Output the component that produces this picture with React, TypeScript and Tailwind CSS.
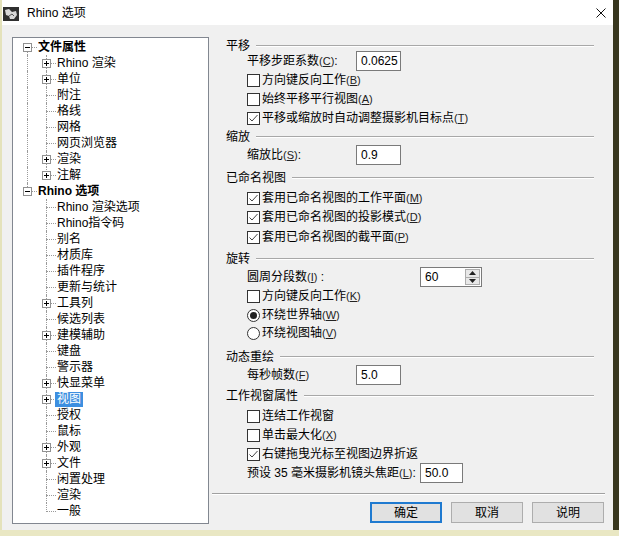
import React from "react";

type TreeNode = {
  label: string;
  level: 0 | 1;
  exp?: "minus" | "plus";
  sel?: boolean;
};

const tree: TreeNode[] = [
  { label: "文件属性", level: 0, exp: "minus" },
  { label: "Rhino 渲染", level: 1, exp: "plus" },
  { label: "单位", level: 1, exp: "plus" },
  { label: "附注", level: 1 },
  { label: "格线", level: 1 },
  { label: "网格", level: 1 },
  { label: "网页浏览器", level: 1 },
  { label: "渲染", level: 1, exp: "plus" },
  { label: "注解", level: 1, exp: "plus" },
  { label: "Rhino 选项", level: 0, exp: "minus" },
  { label: "Rhino 渲染选项", level: 1 },
  { label: "Rhino指令码", level: 1 },
  { label: "别名", level: 1 },
  { label: "材质库", level: 1 },
  { label: "插件程序", level: 1 },
  { label: "更新与统计", level: 1 },
  { label: "工具列", level: 1, exp: "plus" },
  { label: "候选列表", level: 1 },
  { label: "建模辅助", level: 1, exp: "plus" },
  { label: "键盘", level: 1 },
  { label: "警示器", level: 1 },
  { label: "快显菜单", level: 1, exp: "plus" },
  { label: "视图", level: 1, exp: "plus", sel: true },
  { label: "授权", level: 1 },
  { label: "鼠标", level: 1 },
  { label: "外观", level: 1, exp: "plus" },
  { label: "文件", level: 1, exp: "plus" },
  { label: "闲置处理", level: 1 },
  { label: "渲染", level: 1 },
  { label: "一般", level: 1 },
];

const ExpBox = ({ kind, left }: { kind: "minus" | "plus"; left: string }) => (
  <span className={`absolute top-[4px] ${left} w-[9px] h-[9px] border border-[#919191] bg-white`}>
    <span className="absolute left-[1px] top-[3px] w-[5px] h-px bg-black" />
    {kind === "plus" && <span className="absolute left-[3px] top-[1px] w-px h-[5px] bg-black" />}
  </span>
);

const TreeRow = ({ node, i }: { node: TreeNode; i: number }) => {
  // vertical guide of the root level runs from 文件属性 down to Rhino 选项
  const lastChild = i === 8 || i === 29;
  return (
    <div className={`relative h-4 flex items-center ${node.level === 0 ? "pl-[23px] font-bold" : "pl-[42px]"}`}>
      {i === 0 && <span className="absolute left-[14px] top-[13px] bottom-0 border-l border-dotted border-[#9a9a9a]" />}
      {i > 0 && i < 9 && <span className="absolute left-[14px] top-0 bottom-0 border-l border-dotted border-[#9a9a9a]" />}
      {i === 9 && <span className="absolute left-[14px] top-0 h-[4px] border-l border-dotted border-[#9a9a9a]" />}
      {node.level === 0 && (
        <>
          <span className="absolute left-[19px] w-[5px] top-[8px] border-t border-dotted border-[#9a9a9a]" />
          <ExpBox kind="minus" left="left-[10px]" />
        </>
      )}
      {node.level === 1 && (
        <>
          <span
            className={`absolute left-[33px] top-0 border-l border-dotted border-[#9a9a9a] ${lastChild ? "h-[9px]" : "bottom-0"}`}
          />
          <span className="absolute left-[33px] w-[10px] top-[8px] border-t border-dotted border-[#9a9a9a]" />
          {node.exp && <ExpBox kind={node.exp} left="left-[29px]" />}
        </>
      )}
      <span
        className={`relative leading-[15px] h-[15px] px-[2px] ${node.sel ? "bg-[#3d8fe0] text-white" : "text-black"}`}
      >
        {node.label}
      </span>
    </div>
  );
};

const Key = ({ k }: { k: string }) => (
  <span className="text-[11px] text-[#222]">
    (<span className="underline">{k}</span>)
  </span>
);

const Header = ({ title, mt }: { title: string; mt: string }) => (
  <div className={`h-[14px] ${mt} flex items-center pl-[14px] pr-[12px]`}>
    <span>{title}</span>
    <div className="flex-1 ml-[6px] border-t border-[#a8a8a8] border-b border-b-white" />
  </div>
);

const CheckBox = ({ on }: { on?: boolean }) => (
  <span className="w-[13px] h-[13px] border border-[#333] bg-white flex items-center justify-center shrink-0">
    {on && (
      <svg width="11" height="11" viewBox="0 0 11 11">
        <path d="M1.5 5.5 L4 8 L9.5 2" fill="none" stroke="#444" strokeWidth="1" />
      </svg>
    )}
  </span>
);

const Radio = ({ on }: { on?: boolean }) => (
  <span className="w-[13px] h-[13px] rounded-full border border-[#333] bg-white flex items-center justify-center shrink-0">
    {on && <span className="w-[7px] h-[7px] rounded-full bg-[#222]" />}
  </span>
);

const Check = ({ label, k, on, mt }: { label: string; k?: string; on?: boolean; mt: string }) => (
  <div className={`h-[14px] ${mt} flex items-center pl-[35px] gap-[2px]`}>
    <CheckBox on={on} />
    <span>
      {label}
      {k && <Key k={k} />}
    </span>
  </div>
);

const RadioRow = ({ label, k, on, mt }: { label: string; k: string; on?: boolean; mt: string }) => (
  <div className={`h-[14px] ${mt} flex items-center pl-[35px] gap-[2px]`}>
    <Radio on={on} />
    <span>
      {label}
      <Key k={k} />
    </span>
  </div>
);

const Field = ({ value, w }: { value: string; w: string }) => (
  <div className={`${w} h-[20px] shrink-0 border border-[#7a7a7a] bg-white flex items-center pl-[4px] text-[12px]`}>
    {value}
  </div>
);

const Button = ({ label, primary }: { label: string; primary?: boolean }) => (
  <button
    className={`w-[72px] h-[21px] bg-[#e1e1e1] text-[12px] flex items-center justify-center ${
      primary ? "border-2 border-[#1f7ad0]" : "border border-[#adadad]"
    }`}
  >
    {label}
  </button>
);

export default function App() {
  return (
    <div className="w-[619px] h-[536px] flex flex-col bg-[#e9e7c3] text-[12px] text-black font-['Liberation_Sans','Noto_Sans_CJK_SC',sans-serif] overflow-hidden">
      <div className="flex h-[530px]">
        <div className="w-[2px] bg-[#e4e2bb]" />
        <div className="w-[611px] flex flex-col bg-[#f0f0f0]">
          {/* title bar */}
          <div className="h-[25px] bg-white flex items-center pl-[1px] pr-[7px]">
            <svg width="16" height="14" viewBox="0 0 16 14" className="mt-[2px]">
              <rect x="0" y="0" width="16" height="14" fill="#2f2f2f" />
              <path d="M2 3 L6 2 L9 5 L13 4 L14 8 L11 12 L7 12 L6 9 L3 8 Z" fill="#d8d8d8" />
              <path d="M6 9 L9 7 L11 9" fill="none" stroke="#555" strokeWidth="1" />
            </svg>
            <span className="ml-[8px] text-[12px] leading-none">Rhino 选项</span>
            <div className="flex-1" />
            <svg width="10" height="10" viewBox="0 0 10 10">
              <path d="M0.5 0.5 L9.5 9.5 M9.5 0.5 L0.5 9.5" stroke="#111" strokeWidth="1" />
            </svg>
          </div>

          {/* body */}
          <div className="flex-1 flex pt-[12px] pl-[10px]">
            <div className="w-[197px] h-[487px] border border-[#828790] bg-white pt-px overflow-hidden">
              {tree.map((n, i) => (
                <TreeRow key={i} node={n} i={i} />
              ))}
            </div>

            <div className="w-[394px] ml-[3px] flex flex-col">
              <Header title="平移" mt="mt-[2px]" />
              <div className="h-[14px] mt-[1px] flex items-center pl-[35px]">
                <span className="w-[109px] shrink-0">
                  平移步距系数<Key k="C" />:
                </span>
                <Field value="0.0625" w="w-[45px]" />
              </div>
              <Check label="方向键反向工作" k="B" mt="mt-[5px]" />
              <Check label="始终平移平行视图" k="A" mt="mt-[5px]" />
              <Check label="平移或缩放时自动调整摄影机目标点" k="T" on mt="mt-[5px]" />

              <Header title="缩放" mt="mt-[5px]" />
              <div className="h-[14px] mt-[4px] flex items-center pl-[35px]">
                <span className="w-[109px] shrink-0">
                  缩放比<Key k="S" />:
                </span>
                <Field value="0.9" w="w-[45px]" />
              </div>

              <Header title="已命名视图" mt="mt-[9px]" />
              <Check label="套用已命名视图的工作平面" k="M" on mt="mt-[6px]" />
              <Check label="套用已命名视图的投影模式" k="D" on mt="mt-[5px]" />
              <Check label="套用已命名视图的截平面" k="P" on mt="mt-[6px]" />

              <Header title="旋转" mt="mt-[8px]" />
              <div className="h-[14px] mt-[4px] flex items-center pl-[35px]">
                <span className="w-[173px] shrink-0">
                  圆周分段数<Key k="I" /> :
                </span>
                <div className="w-[62px] h-[20px] shrink-0 border border-[#7a7a7a] bg-white flex items-center">
                  <span className="flex-1 pl-[4px]">60</span>
                  <div className="w-[15px] h-[16px] mr-px flex flex-col border border-[#adadad] bg-[#e8e8e8]">
                    <div className="flex-1 flex items-center justify-center border-b border-[#adadad]">
                      <svg width="7" height="4" viewBox="0 0 7 4">
                        <path d="M0 4 L3.5 0 L7 4 Z" fill="#222" />
                      </svg>
                    </div>
                    <div className="flex-1 flex items-center justify-center">
                      <svg width="7" height="4" viewBox="0 0 7 4">
                        <path d="M0 0 L3.5 4 L7 0 Z" fill="#222" />
                      </svg>
                    </div>
                  </div>
                </div>
              </div>
              <Check label="方向键反向工作" k="K" mt="mt-[5px]" />
              <RadioRow label="环绕世界轴" k="W" on mt="mt-[5px]" />
              <RadioRow label="环绕视图轴" k="V" mt="mt-[4px]" />

              <Header title="动态重绘" mt="mt-[10px]" />
              <div className="h-[14px] mt-[4px] flex items-center pl-[35px]">
                <span className="w-[109px] shrink-0">
                  每秒帧数<Key k="F" />
                </span>
                <Field value="5.0" w="w-[45px]" />
              </div>

              <Header title="工作视窗属性" mt="mt-[7px]" />
              <Check label="连结工作视窗" mt="mt-[6px]" />
              <Check label="单击最大化" k="X" mt="mt-[5px]" />
              <Check label="右键拖曳光标至视图边界折返" on mt="mt-[5px]" />
              <div className="h-[14px] mt-[5px] flex items-center pl-[35px]">
                <span className="w-[173px] shrink-0">
                  预设 35 毫米摄影机镜头焦距<Key k="L" />:
                </span>
                <Field value="50.0" w="w-[43px]" />
              </div>

              <div className="mt-[13px] mr-px border-t border-[#a0a0a0] border-b border-b-white" />
              <div className="mt-[7px] flex justify-end gap-[9px] pr-[2px]">
                <Button label="确定" primary />
                <Button label="取消" />
                <Button label="说明" />
              </div>
            </div>
          </div>
        </div>
        <div className="w-[6px] bg-[#38371f]" />
      </div>
      <div className="h-[6px] bg-[#e9e7c3]" />
    </div>
  );
}
